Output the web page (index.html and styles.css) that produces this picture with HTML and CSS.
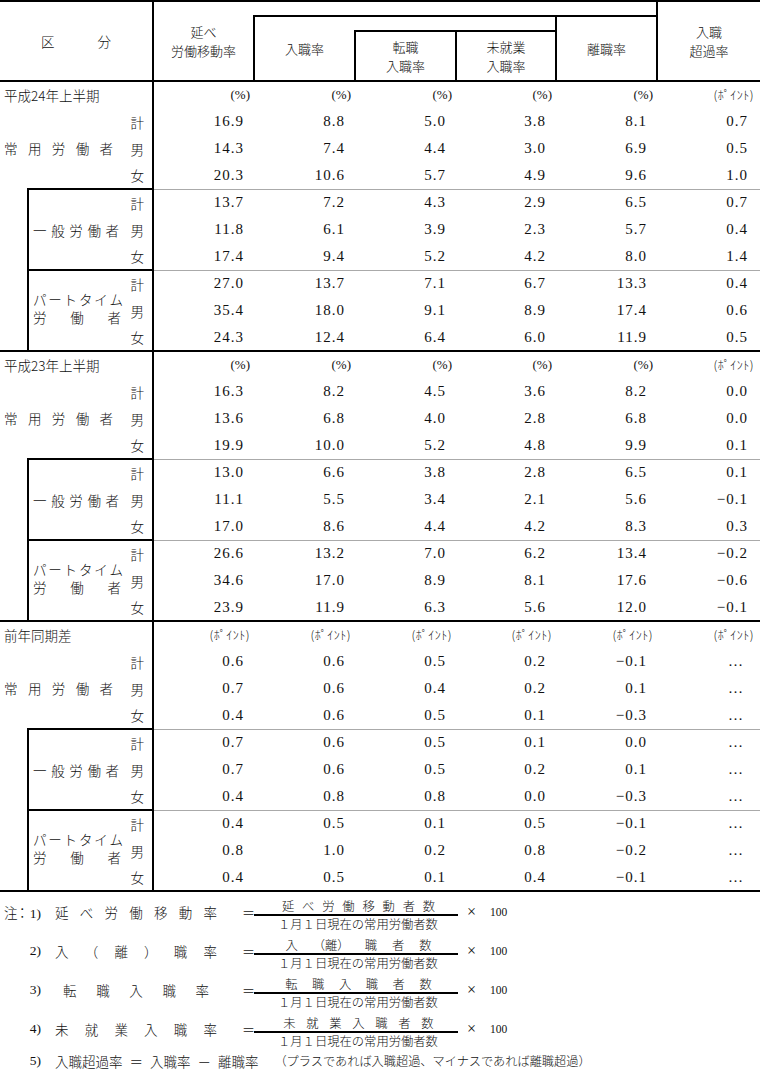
FILE: index.html
```html
<!DOCTYPE html>
<html lang="ja">
<head>
<meta charset="utf-8">
<title>労働移動率</title>
<link rel="stylesheet" href="styles.css">
</head>
<body>
<table class="stats">
<colgroup>
<col class="c-ind"><col class="c-lab"><col class="c-sx">
<col class="c-d"><col class="c-d"><col class="c-d"><col class="c-d4"><col class="c-d"><col class="c-dl">
</colgroup>
<thead>
<tr class="h1">
  <th colspan="3" rowspan="3" class="kubun"><span class="kb"><span>区</span><span>分</span></span></th>
  <th rowspan="3" class="hc">延べ<br>労働移動率</th>
  <th colspan="4" class="h-top"></th>
  <th rowspan="3" class="hc bl">入職<br>超過率</th>
</tr>
<tr class="h2">
  <th rowspan="2" class="hc bl">入職率</th>
  <th colspan="2" class="h-mid"></th>
  <th rowspan="2" class="hc bl">離職率</th>
</tr>
<tr class="h3">
  <th class="hc bl">転職<br>入職率</th>
  <th class="hc bl">未就業<br>入職率</th>
</tr>
</thead>
<tbody>
<!-- 平成24年上半期 -->
<tr class="r sec">
  <td colspan="3" class="seclab">平成24年上半期</td>
  <td class="u">(%)</td><td class="u">(%)</td><td class="u">(%)</td><td class="u">(%)</td><td class="u">(%)</td><td class="u"><span class="pt">(ﾎﾟｲﾝﾄ)</span></td>
</tr>
<tr class="r">
  <td colspan="2" rowspan="3" class="grp"><span class="just w-main"><span>常</span><span>用</span><span>労</span><span>働</span><span>者</span></span></td>
  <td class="sx">計</td>
  <td class="n">16.9</td><td class="n">8.8</td><td class="n">5.0</td><td class="n">3.8</td><td class="n">8.1</td><td class="n">0.7</td>
</tr>
<tr class="r"><td class="sx">男</td>
  <td class="n">14.3</td><td class="n">7.4</td><td class="n">4.4</td><td class="n">3.0</td><td class="n">6.9</td><td class="n">0.5</td>
</tr>
<tr class="r"><td class="sx">女</td>
  <td class="n">20.3</td><td class="n">10.6</td><td class="n">5.7</td><td class="n">4.9</td><td class="n">9.6</td><td class="n">1.0</td>
</tr>
<tr class="r box">
  <td rowspan="6" class="ind"></td>
  <td rowspan="3" class="sub"><span class="just w-ippan"><span>一</span><span>般</span><span>労</span><span>働</span><span>者</span></span></td>
  <td class="sx">計</td>
  <td class="n">13.7</td><td class="n">7.2</td><td class="n">4.3</td><td class="n">2.9</td><td class="n">6.5</td><td class="n">0.7</td>
</tr>
<tr class="r"><td class="sx">男</td>
  <td class="n">11.8</td><td class="n">6.1</td><td class="n">3.9</td><td class="n">2.3</td><td class="n">5.7</td><td class="n">0.4</td>
</tr>
<tr class="r"><td class="sx">女</td>
  <td class="n">17.4</td><td class="n">9.4</td><td class="n">5.2</td><td class="n">4.2</td><td class="n">8.0</td><td class="n">1.4</td>
</tr>
<tr class="r box">
  <td rowspan="3" class="sub"><span class="two"><span class="just w-part"><span>パ</span><span>ー</span><span>ト</span><span>タ</span><span>イ</span><span>ム</span></span><span class="just w-rou"><span>労</span><span>働</span><span>者</span></span></span></td>
  <td class="sx">計</td>
  <td class="n">27.0</td><td class="n">13.7</td><td class="n">7.1</td><td class="n">6.7</td><td class="n">13.3</td><td class="n">0.4</td>
</tr>
<tr class="r"><td class="sx">男</td>
  <td class="n">35.4</td><td class="n">18.0</td><td class="n">9.1</td><td class="n">8.9</td><td class="n">17.4</td><td class="n">0.6</td>
</tr>
<tr class="r"><td class="sx">女</td>
  <td class="n">24.3</td><td class="n">12.4</td><td class="n">6.4</td><td class="n">6.0</td><td class="n">11.9</td><td class="n">0.5</td>
</tr>

<!-- 平成23年上半期 -->
<tr class="r sec">
  <td colspan="3" class="seclab">平成23年上半期</td>
  <td class="u">(%)</td><td class="u">(%)</td><td class="u">(%)</td><td class="u">(%)</td><td class="u">(%)</td><td class="u"><span class="pt">(ﾎﾟｲﾝﾄ)</span></td>
</tr>
<tr class="r">
  <td colspan="2" rowspan="3" class="grp"><span class="just w-main"><span>常</span><span>用</span><span>労</span><span>働</span><span>者</span></span></td>
  <td class="sx">計</td>
  <td class="n">16.3</td><td class="n">8.2</td><td class="n">4.5</td><td class="n">3.6</td><td class="n">8.2</td><td class="n">0.0</td>
</tr>
<tr class="r"><td class="sx">男</td>
  <td class="n">13.6</td><td class="n">6.8</td><td class="n">4.0</td><td class="n">2.8</td><td class="n">6.8</td><td class="n">0.0</td>
</tr>
<tr class="r"><td class="sx">女</td>
  <td class="n">19.9</td><td class="n">10.0</td><td class="n">5.2</td><td class="n">4.8</td><td class="n">9.9</td><td class="n">0.1</td>
</tr>
<tr class="r box">
  <td rowspan="6" class="ind"></td>
  <td rowspan="3" class="sub"><span class="just w-ippan"><span>一</span><span>般</span><span>労</span><span>働</span><span>者</span></span></td>
  <td class="sx">計</td>
  <td class="n">13.0</td><td class="n">6.6</td><td class="n">3.8</td><td class="n">2.8</td><td class="n">6.5</td><td class="n">0.1</td>
</tr>
<tr class="r"><td class="sx">男</td>
  <td class="n">11.1</td><td class="n">5.5</td><td class="n">3.4</td><td class="n">2.1</td><td class="n">5.6</td><td class="n">−0.1</td>
</tr>
<tr class="r"><td class="sx">女</td>
  <td class="n">17.0</td><td class="n">8.6</td><td class="n">4.4</td><td class="n">4.2</td><td class="n">8.3</td><td class="n">0.3</td>
</tr>
<tr class="r box">
  <td rowspan="3" class="sub"><span class="two"><span class="just w-part"><span>パ</span><span>ー</span><span>ト</span><span>タ</span><span>イ</span><span>ム</span></span><span class="just w-rou"><span>労</span><span>働</span><span>者</span></span></span></td>
  <td class="sx">計</td>
  <td class="n">26.6</td><td class="n">13.2</td><td class="n">7.0</td><td class="n">6.2</td><td class="n">13.4</td><td class="n">−0.2</td>
</tr>
<tr class="r"><td class="sx">男</td>
  <td class="n">34.6</td><td class="n">17.0</td><td class="n">8.9</td><td class="n">8.1</td><td class="n">17.6</td><td class="n">−0.6</td>
</tr>
<tr class="r"><td class="sx">女</td>
  <td class="n">23.9</td><td class="n">11.9</td><td class="n">6.3</td><td class="n">5.6</td><td class="n">12.0</td><td class="n">−0.1</td>
</tr>

<!-- 前年同期差 -->
<tr class="r sec">
  <td colspan="3" class="seclab">前年同期差</td>
  <td class="u"><span class="pt">(ﾎﾟｲﾝﾄ)</span></td><td class="u"><span class="pt">(ﾎﾟｲﾝﾄ)</span></td><td class="u"><span class="pt">(ﾎﾟｲﾝﾄ)</span></td><td class="u"><span class="pt">(ﾎﾟｲﾝﾄ)</span></td><td class="u"><span class="pt">(ﾎﾟｲﾝﾄ)</span></td><td class="u"><span class="pt">(ﾎﾟｲﾝﾄ)</span></td>
</tr>
<tr class="r">
  <td colspan="2" rowspan="3" class="grp"><span class="just w-main"><span>常</span><span>用</span><span>労</span><span>働</span><span>者</span></span></td>
  <td class="sx">計</td>
  <td class="n">0.6</td><td class="n">0.6</td><td class="n">0.5</td><td class="n">0.2</td><td class="n">−0.1</td><td class="n dots">…</td>
</tr>
<tr class="r"><td class="sx">男</td>
  <td class="n">0.7</td><td class="n">0.6</td><td class="n">0.4</td><td class="n">0.2</td><td class="n">0.1</td><td class="n dots">…</td>
</tr>
<tr class="r"><td class="sx">女</td>
  <td class="n">0.4</td><td class="n">0.6</td><td class="n">0.5</td><td class="n">0.1</td><td class="n">−0.3</td><td class="n dots">…</td>
</tr>
<tr class="r box">
  <td rowspan="6" class="ind"></td>
  <td rowspan="3" class="sub"><span class="just w-ippan"><span>一</span><span>般</span><span>労</span><span>働</span><span>者</span></span></td>
  <td class="sx">計</td>
  <td class="n">0.7</td><td class="n">0.6</td><td class="n">0.5</td><td class="n">0.1</td><td class="n">0.0</td><td class="n dots">…</td>
</tr>
<tr class="r"><td class="sx">男</td>
  <td class="n">0.7</td><td class="n">0.6</td><td class="n">0.5</td><td class="n">0.2</td><td class="n">0.1</td><td class="n dots">…</td>
</tr>
<tr class="r"><td class="sx">女</td>
  <td class="n">0.4</td><td class="n">0.8</td><td class="n">0.8</td><td class="n">0.0</td><td class="n">−0.3</td><td class="n dots">…</td>
</tr>
<tr class="r box">
  <td rowspan="3" class="sub"><span class="two"><span class="just w-part"><span>パ</span><span>ー</span><span>ト</span><span>タ</span><span>イ</span><span>ム</span></span><span class="just w-rou"><span>労</span><span>働</span><span>者</span></span></span></td>
  <td class="sx">計</td>
  <td class="n">0.4</td><td class="n">0.5</td><td class="n">0.1</td><td class="n">0.5</td><td class="n">−0.1</td><td class="n dots">…</td>
</tr>
<tr class="r"><td class="sx">男</td>
  <td class="n">0.8</td><td class="n">1.0</td><td class="n">0.2</td><td class="n">0.8</td><td class="n">−0.2</td><td class="n dots">…</td>
</tr>
<tr class="r last"><td class="sx">女</td>
  <td class="n">0.4</td><td class="n">0.5</td><td class="n">0.1</td><td class="n">0.4</td><td class="n">−0.1</td><td class="n dots">…</td>
</tr>
</tbody>
</table>

<div class="notes">
  <div class="fr">
    <span class="no first"><span class="chu">注：</span><span class="nn">1)</span></span>
    <span class="term"><span>延</span><span>べ</span><span>労</span><span>働</span><span>移</span><span>動</span><span>率</span></span>
    <span class="eq">＝</span>
    <span class="frac">
      <span class="num"><span>延</span><span>べ</span><span>労</span><span>働</span><span>移</span><span>動</span><span>者</span><span>数</span></span>
      <span class="den">１月１日現在の常用労働者数</span>
    </span>
    <span class="times">×</span>
    <span class="hundred">100</span>
  </div>
  <div class="fr">
    <span class="no"><span class="nn">2)</span></span>
    <span class="term"><span>入</span><span>（</span><span>離</span><span>）</span><span>職</span><span>率</span></span>
    <span class="eq">＝</span>
    <span class="frac">
      <span class="num"><span>入</span><span>（離）</span><span>職</span><span>者</span><span>数</span></span>
      <span class="den">１月１日現在の常用労働者数</span>
    </span>
    <span class="times">×</span>
    <span class="hundred">100</span>
  </div>
  <div class="fr">
    <span class="no"><span class="nn">3)</span></span>
    <span class="term pad"><span>転</span><span>職</span><span>入</span><span>職</span><span>率</span></span>
    <span class="eq">＝</span>
    <span class="frac">
      <span class="num"><span>転</span><span>職</span><span>入</span><span>職</span><span>者</span><span>数</span></span>
      <span class="den">１月１日現在の常用労働者数</span>
    </span>
    <span class="times">×</span>
    <span class="hundred">100</span>
  </div>
  <div class="fr">
    <span class="no"><span class="nn">4)</span></span>
    <span class="term"><span>未</span><span>就</span><span>業</span><span>入</span><span>職</span><span>率</span></span>
    <span class="eq">＝</span>
    <span class="frac">
      <span class="num"><span>未</span><span>就</span><span>業</span><span>入</span><span>職</span><span>者</span><span>数</span></span>
      <span class="den">１月１日現在の常用労働者数</span>
    </span>
    <span class="times">×</span>
    <span class="hundred">100</span>
  </div>
  <div class="fr fr5">
    <span class="no"><span class="nn">5)</span></span>
    <span class="line5">入職超過率 ＝ 入職率 － 離職率</span>
    <span class="paren">（プラスであれば入職超過、マイナスであれば離職超過）</span>
  </div>
</div>
</body>
</html>
```

FILE: styles.css
```css
html, body {
  margin: 0;
  padding: 0;
  background: #fff;
}

body {
  color: #111;
  font-family: "Noto Sans CJK JP", sans-serif;
  font-weight: 300;
  font-size: 13.5px;
}

th, td {
  padding: 0;
  font-weight: 300;
  white-space: nowrap;
}

.stats {
  border-collapse: collapse;
  table-layout: fixed;
  width: 760px;
  border-top: 2px solid #000;
  border-bottom: 2px solid #000;
}

.c-ind { width: 28px; }
.c-lab { width: 97px; }
.c-sx { width: 28px; }
.c-d { width: 101px; }
.c-d4 { width: 100px; }
.c-dl { width: 103px; }

/* header */
.h1 { height: 15px; }
.h2 { height: 15px; }
.h3 { height: 50px; }

.h3 th,
.h1 th[rowspan="3"] {
  border-bottom: 2px solid #000;
}

.kubun {
  border-right: 2px solid #000;
  text-align: center;
  vertical-align: middle;
}
.kb {
  display: inline-flex;
  gap: 43px;
  font-size: 13.5px;
}

.hc {
  text-align: center;
  vertical-align: middle;
  line-height: 19px;
  font-size: 13px;
}
.bl { border-left: 2px solid #000; }
.h-top { border-bottom: 2px solid #000; }
.h-mid { border-bottom: 2px solid #000; }

/* body */
.r { height: 27px; }
.sec td { border-top: 2px solid #000; }
.last td { border-bottom: 2px solid #000; }

.seclab {
  text-align: left;
  padding-left: 4px;
  border-right: 2px solid #000;
  vertical-align: middle;
  font-size: 13.5px;
}

.sx {
  text-align: right;
  padding-right: 8px;
  border-right: 2px solid #000;
  font-size: 13.5px;
  vertical-align: middle;
}

.grp {
  vertical-align: middle;
  padding-left: 4px;
}
.sub {
  vertical-align: middle;
  padding-left: 4px;
  border-left: 2px solid #000;
  border-top: 2px solid #000;
}
.box .sx { border-top: 2px solid #000; }
.box .n { border-top: 1px solid #aaa; }

.just {
  display: flex;
  justify-content: space-between;
  font-size: 13.5px;
  line-height: 18px;
}
.w-main { width: 109px; }
.w-ippan { width: 86px; }
.w-part { width: 90px; }
.w-rou { width: 88px; }
.two {
  display: flex;
  flex-direction: column;
  position: relative;
  top: -3px;
}

.n {
  text-align: right;
  padding-right: 10px;
  font-family: "Liberation Serif", serif;
  font-size: 15px;
  letter-spacing: 1px;
  vertical-align: middle;
}
.n:last-child { padding-right: 12px; }
.n.dots { padding-right: 17px; letter-spacing: 0; }

.u {
  text-align: right;
  padding-right: 4px;
  font-family: "Liberation Serif", serif;
  font-size: 13px;
  vertical-align: middle;
}
.u:last-child { padding-right: 6px; }
.pt {
  font-family: "Noto Sans CJK JP", sans-serif;
  font-size: 12px;
  letter-spacing: 0.5px;
}

/* notes */
.notes {
  display: flex;
  flex-direction: column;
}
.fr {
  display: flex;
  align-items: center;
  height: 39px;
}
.fr5 { height: 25px; }

.no {
  box-sizing: border-box;
  width: 41px;
  padding-left: 4px;
  display: flex;
  justify-content: flex-end;
  align-items: baseline;
}
.no.first { justify-content: space-between; }
.chu { letter-spacing: -2px; font-size: 13.5px; }
.nn {
  font-family: "Liberation Serif", serif;
  font-size: 13.5px;
}

.term {
  margin-left: 14px;
  width: 162px;
  display: flex;
  justify-content: space-between;
  font-size: 13.5px;
}
.term.pad { padding: 0 8px; width: 146px; }

.eq {
  margin-left: 25px;
  width: 12px;
  text-align: center;
  font-size: 13px;
}

.frac {
  align-self: flex-start;
  margin-top: 6px;
  width: 204px;
  display: flex;
  flex-direction: column;
  font-size: 12.3px;
}
.frac .num {
  display: flex;
  justify-content: space-around;
  padding: 0 19px 0 24px;
  line-height: 16px;
  border-bottom: 2px solid #000;
}
.frac .den {
  padding-left: 24px;
  line-height: 17px;
}

.times {
  margin-left: 9px;
  font-family: "Liberation Serif", serif;
  font-size: 16px;
}
.hundred {
  margin-left: 14px;
  font-family: "Liberation Serif", serif;
  font-size: 11.5px;
}

.line5 {
  margin-left: 14px;
  font-size: 13.5px;
  word-spacing: 4px;
}
.paren {
  margin-left: 16px;
  font-size: 12.2px;
}
```
